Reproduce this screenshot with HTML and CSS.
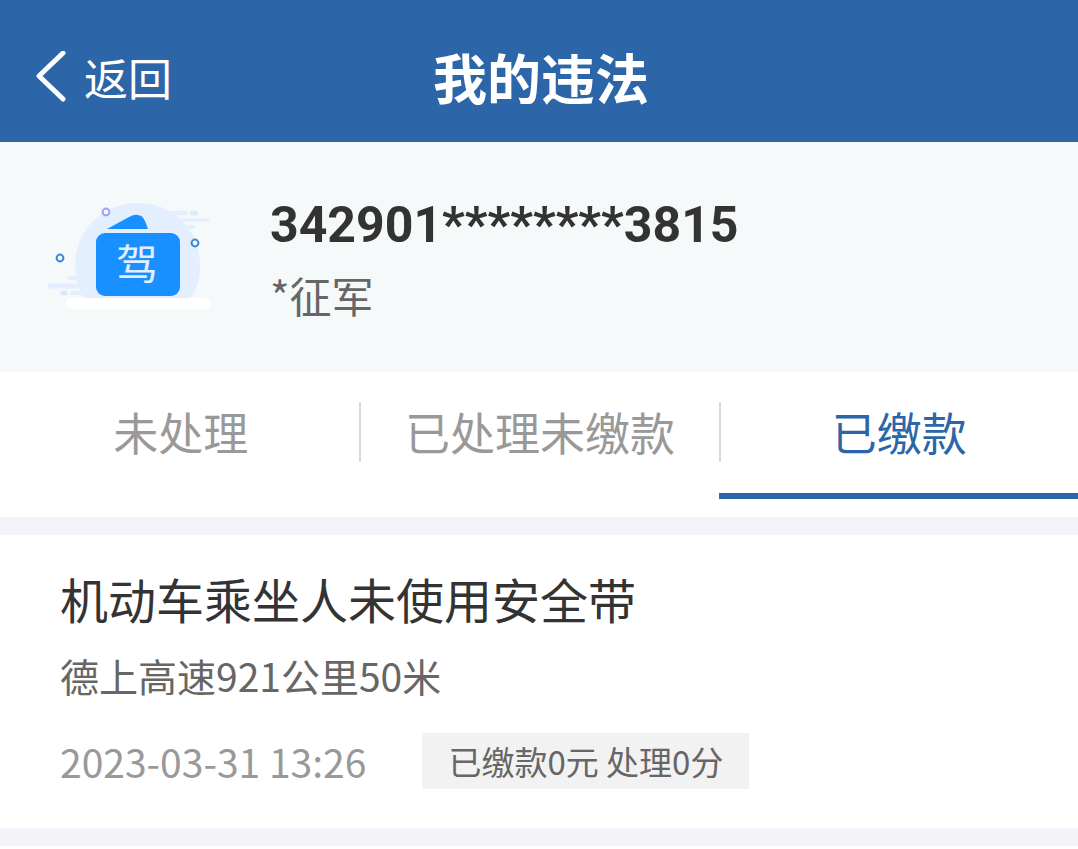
FILE: index.html
```
<!DOCTYPE html>
<html lang="zh-CN">
<head>
    <meta charset="UTF-8">
    <meta name="viewport" content="width=device-width, initial-scale=1.0">
    <title>我的违法</title>
    <link rel="stylesheet" href="styles.css">
</head>
<body>
    <header class="header">
        <a class="back" href="#">
            <svg class="back-icon" viewBox="0 0 30 52" aria-hidden="true">
                <path d="M27 2 L3 25 L27 48"/>
            </svg>
            <span>返回</span>
        </a>
        <h1 class="title">我的违法</h1>
    </header>

    <section class="profile">
        <svg class="license-icon" viewBox="0 0 200 150" aria-hidden="true">
            <path fill="#e3eeff" d="M54 118 C48 109 45 98 45 86 C45 50 72 23 108 23 C144 23 170 50 170 86 C170 98 167 109 160 118 Z"/>
            <g stroke="#e3eeff" stroke-linecap="round" fill="none">
                <path stroke-width="4" d="M130 33 H156 M150 47 H163 M40 98 H54 M42 113 H56"/>
                <path stroke-width="3" d="M145 40 H178"/>
                <path stroke-width="5" d="M20 106 H54"/>
            </g>
            <ellipse fill="#d8eaff" cx="164" cy="33" rx="4" ry="2.5"/>
            <ellipse fill="#d8eaff" cx="34" cy="113" rx="4" ry="2.5"/>
            <path fill="#1890ff" d="M77 49 L99 37 Q110 31 115 41 L118 49 Z"/>
            <rect fill="#1890ff" x="66" y="53" width="84" height="63" rx="9"/>
            <rect fill="#fff" x="36" y="118" width="144" height="11" rx="5"/>
            <g fill="#f5f9fa" stroke-width="2">
                <circle stroke="#9ea0f8" cx="76" cy="32" r="3.4"/>
                <circle stroke="#3d84dc" cx="30" cy="78" r="3.4"/>
                <circle stroke="#3d84dc" cx="165" cy="63" r="3.4"/>
            </g>
            <text class="license-text" x="107" y="100" text-anchor="middle">驾</text>
        </svg>
        <div class="profile-info">
            <p class="id-number">342901********3815</p>
            <p class="name">*征军</p>
        </div>
    </section>

    <nav class="tabs">
        <button class="tab" type="button"><span class="tab-label">未处理</span></button>
        <button class="tab" type="button"><span class="tab-label">已处理未缴款</span></button>
        <button class="tab active" type="button"><span class="tab-label">已缴款</span></button>
    </nav>

    <main class="list">
        <article class="record">
            <h2 class="record-title">机动车乘坐人未使用安全带</h2>
            <p class="place">德上高速921公里50米</p>
            <div class="record-foot">
                <time class="time" datetime="2023-03-31T13:26">2023-03-31 13:26</time>
                <span class="tag">已缴款0元 处理0分</span>
            </div>
        </article>
    </main>
</body>
</html>
```

FILE: styles.css
```
*{
    box-sizing: border-box;
}
body{
    margin: 0;
    background-color: white;
    color: #333;
    font-family: "Noto Sans CJK SC", sans-serif;
}
h1, h2, p{
    margin: 0;
    font-weight: 400;
}
.header{
    display: grid;
    grid-template-columns: 1fr auto 1fr;
    align-items: center;
    padding: 37px 32px 25px 36px;
    background-color: #2c66a9;
    color: white;
}
.back{
    display: flex;
    align-items: center;
    gap: 18px;
    color: white;
    font-size: 44px;
    line-height: 80px;
    text-decoration: none;
}
.back-icon{
    width: 30px;
    height: 52px;
    fill: none;
    stroke: white;
    stroke-width: 5;
    stroke-linecap: round;
    stroke-linejoin: round;
}
.title{
    font-size: 54px;
    font-weight: 700;
    line-height: 80px;
}
.profile{
    display: flex;
    align-items: flex-start;
    gap: 40px;
    padding: 38px 30px 42px;
    background-color: #f5f9fa;
}
.license-icon{
    width: 200px;
    height: 150px;
}
.license-text{
    fill: #e3eeff;
    font-size: 42px;
}
.profile-info{
    padding-top: 10px;
}
.id-number{
    font-family: Roboto, "Noto Sans CJK SC", sans-serif;
    font-size: 50px;
    font-weight: 700;
    line-height: 70px;
}
.name{
    color: #666;
    font-size: 42px;
    line-height: 70px;
}
.tabs{
    display: grid;
    grid-template-columns: 1fr 1fr 1fr;
    padding: 30px 0 18px;
}
.tab{
    padding: 0 0 31px;
    border: 0;
    border-bottom: 6px solid transparent;
    background: none;
    color: #999;
    font-family: inherit;
    font-size: 45px;
}
.tab-label{
    display: block;
    border-left: 2px solid #d8d8d8;
    line-height: 60px;
}
.tab:first-child .tab-label{
    border-left-color: transparent;
}
.tab.active{
    border-bottom-color: #2c66a9;
    color: #2c66a9;
}
.list{
    border-top: 18px solid #f4f3f9;
}
.record{
    padding: 28px 60px 39px;
    border-bottom: 18px solid #f4f3f9;
}
.record-title{
    font-size: 48px;
    line-height: 70px;
}
.place{
    margin-top: 12px;
    color: #666;
    font-size: 39px;
    line-height: 60px;
}
.record-foot{
    display: flex;
    align-items: center;
    gap: 56px;
    margin-top: 28px;
}
.time{
    color: #999;
    font-size: 39px;
    line-height: 56px;
}
.tag{
    padding: 0 26px;
    background-color: #f2f2f2;
    color: #666;
    font-size: 33px;
    line-height: 56px;
}
```
